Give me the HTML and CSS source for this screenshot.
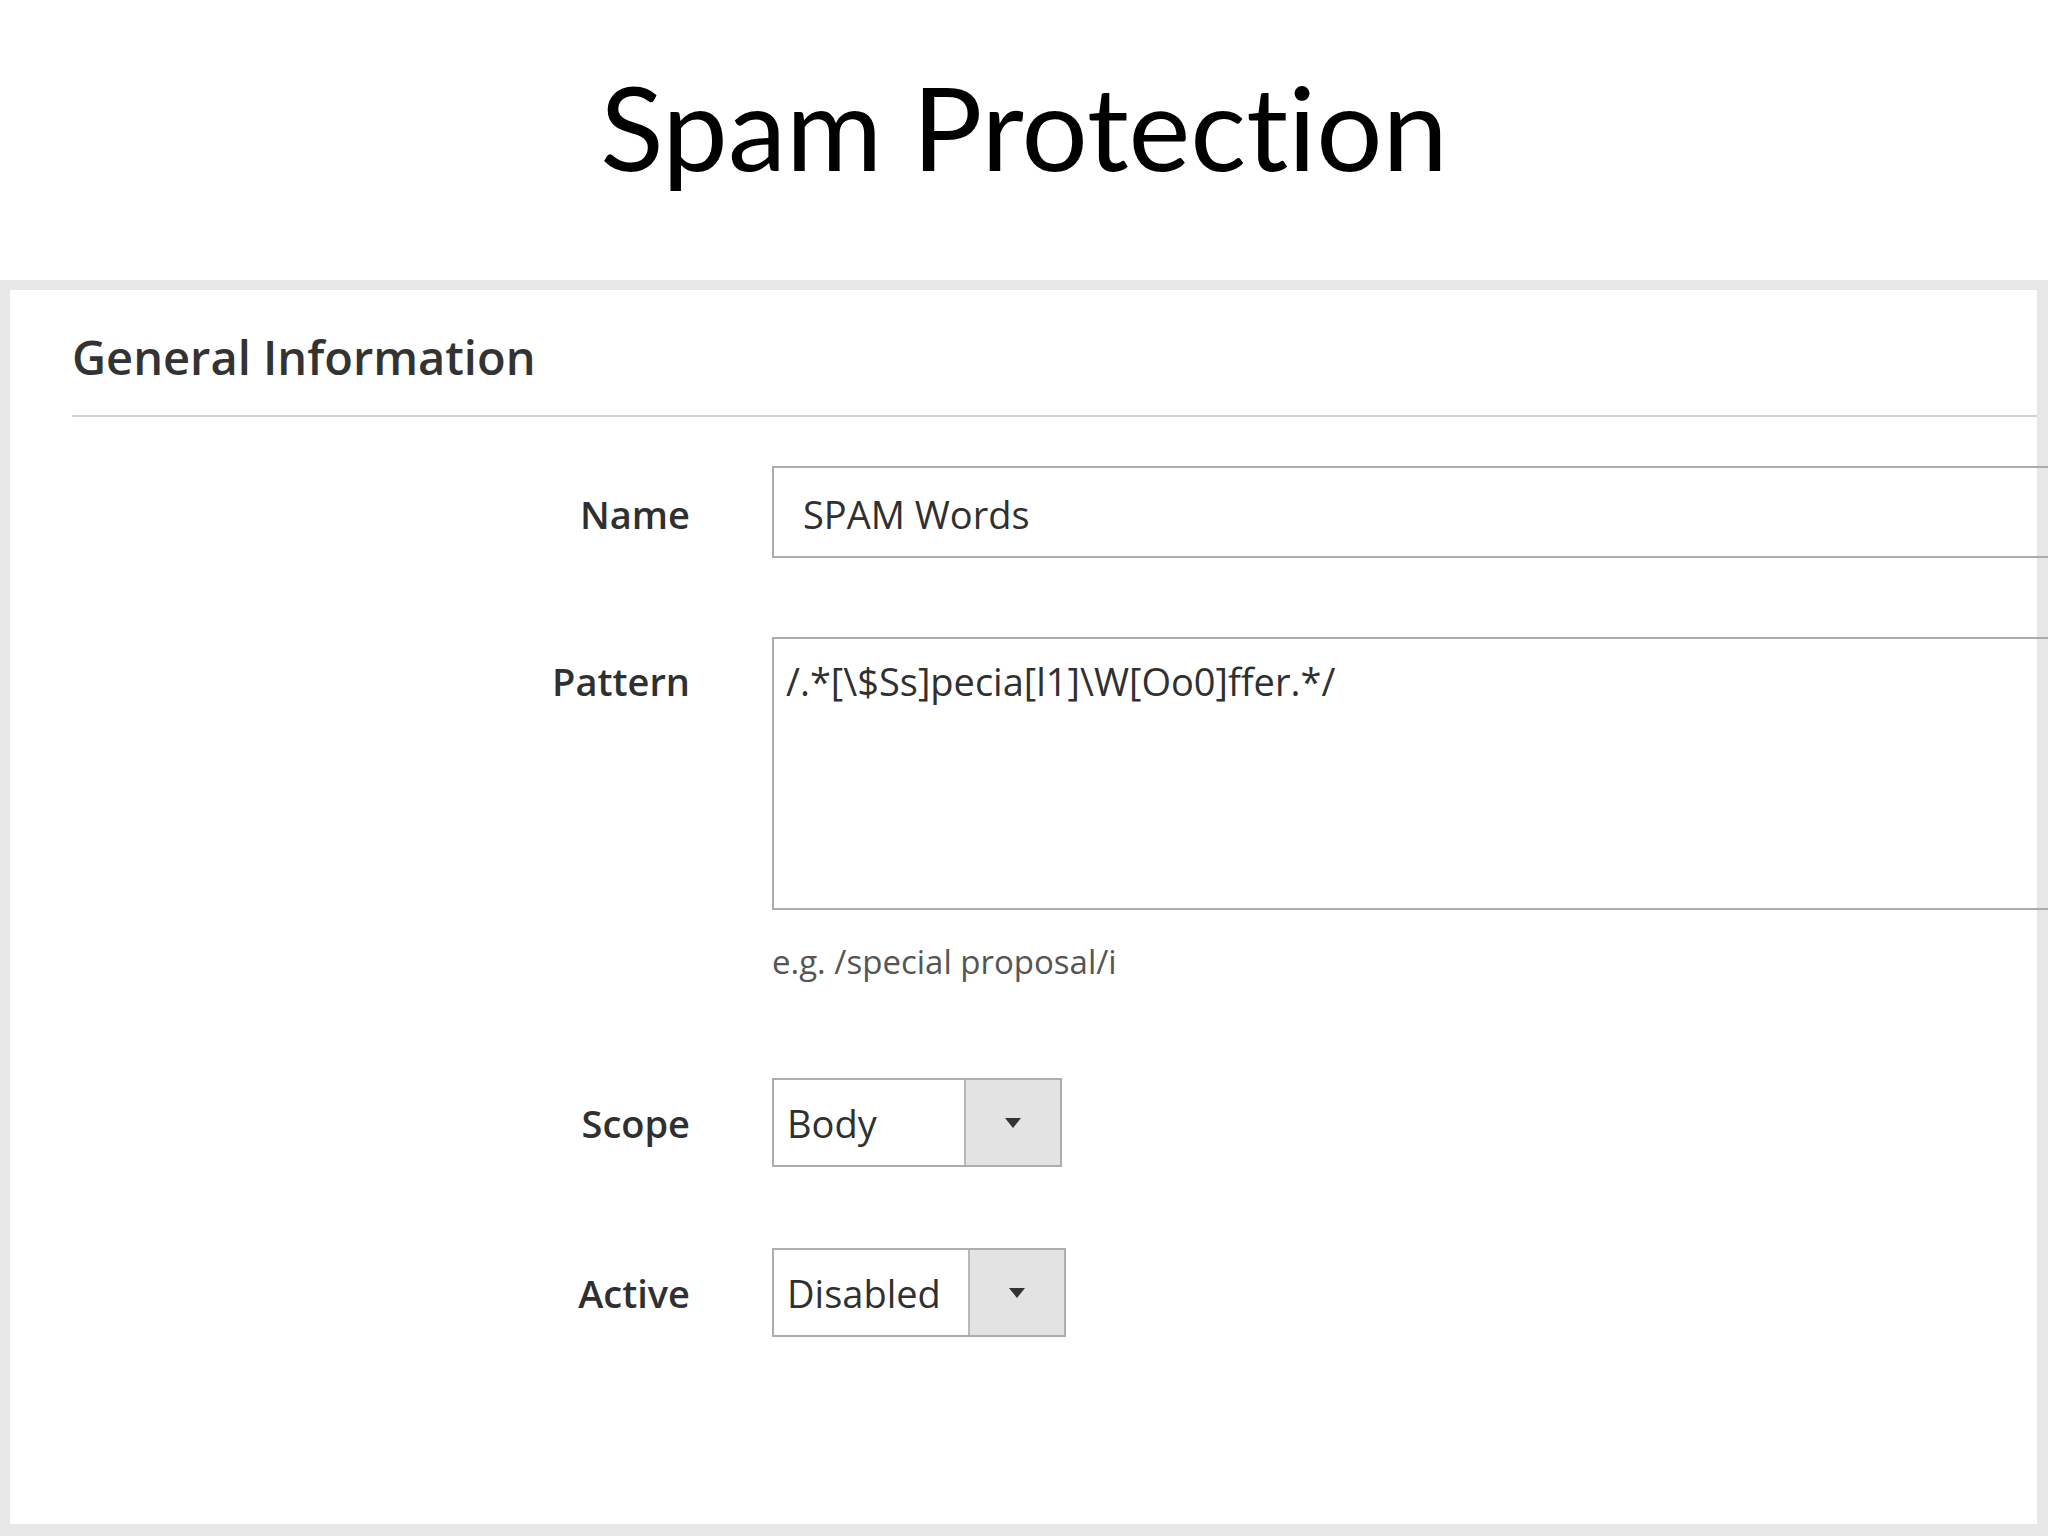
FILE: index.html
```html
<!DOCTYPE html>
<html lang="en">
<head>
<meta charset="utf-8">
<title>Spam Protection</title>
<link rel="stylesheet" href="styles.css">
</head>
<body>
<h1 class="title">Spam Protection</h1>
<div class="frame">
  <section class="panel">
    <h2 class="panel-title">General Information</h2>
    <div class="form">
      <div class="field field-name">
        <div class="label">Name</div>
        <div class="control">
          <div class="input">SPAM Words</div>
        </div>
      </div>
      <div class="field field-pattern">
        <div class="label">Pattern</div>
        <div class="control">
          <div class="textarea">/.*[\$Ss]pecia[l1]\W[Oo0]ffer.*/</div>
          <div class="note">e.g. /special proposal/i</div>
        </div>
      </div>
      <div class="field field-scope">
        <div class="label">Scope</div>
        <div class="control">
          <div class="select select-scope">
            <span class="select-value">Body</span>
            <span class="select-arrow"><span class="caret"></span></span>
          </div>
        </div>
      </div>
      <div class="field field-active">
        <div class="label">Active</div>
        <div class="control">
          <div class="select select-active">
            <span class="select-value">Disabled</span>
            <span class="select-arrow"><span class="caret"></span></span>
          </div>
        </div>
      </div>
    </div>
  </section>
</div>
</body>
</html>
```

FILE: styles.css
```css
* {
  box-sizing: border-box;
}

html, body {
  margin: 0;
  padding: 0;
  background: #ffffff;
}

body {
  width: 2048px;
  height: 1536px;
  overflow: hidden;
  font-family: "Open Sans", "Liberation Sans", sans-serif;
  color: #303030;
}

.title {
  margin: 0;
  padding-top: 56px;
  height: 280px;
  font-family: Lato, "Open Sans", sans-serif;
  font-weight: 400;
  font-size: 117px;
  line-height: 140px;
  text-align: center;
  color: #000000;
  font-variant-ligatures: none;
  font-feature-settings: "liga" 0, "dlig" 0;
}

.frame {
  height: 1256px;
  background: #e7e7e7;
  padding: 10px 11px 12px 10px;
  overflow: hidden;
}

.panel {
  height: 100%;
  background: #ffffff;
  padding: 39px 0 0 62px;
}

.panel-title {
  margin: 0;
  font-size: 47px;
  font-weight: 600;
  line-height: 56px;
  color: #333333;
  padding-bottom: 30px;
  border-bottom: 2px solid #d3d3d3;
}

.form {
  margin-top: 49px;
}

.field {
  display: grid;
  grid-template-columns: 618px 1fr;
  column-gap: 82px;
  align-items: baseline;
}

.field-name {
  margin-bottom: 79px;
}

.field-pattern {
  margin-bottom: 94px;
}

.field-scope {
  margin-bottom: 81px;
}

.label {
  text-align: right;
  font-size: 38px;
  font-weight: 600;
  color: #303030;
}

.control {
  margin-right: -11px;
}

.input {
  display: flex;
  align-items: center;
  height: 92px;
  padding: 4px 0 0 29px;
  border: 2px solid #adadad;
  border-right: none;
  font-size: 38px;
  color: #303030;
}

.textarea {
  height: 273px;
  padding: 16px 12px;
  border: 2px solid #adadad;
  border-right: none;
  font-size: 38px;
  color: #303030;
}

.note {
  margin-top: 29px;
  font-size: 33px;
  color: #555555;
}

.select {
  display: flex;
  height: 89px;
  border: 2px solid #adadad;
  font-size: 38px;
  color: #303030;
}

.select-scope {
  width: 290px;
}

.select-active {
  width: 294px;
}

.select-value {
  flex: 1;
  display: flex;
  align-items: center;
  padding-left: 13px;
}

.select-arrow {
  width: 96px;
  display: flex;
  align-items: center;
  justify-content: center;
  background: #e3e3e3;
  border-left: 2px solid #b8b8b8;
}

.caret {
  width: 0;
  height: 0;
  border-left: 8px solid transparent;
  border-right: 8px solid transparent;
  border-top: 10px solid #333333;
}
```
